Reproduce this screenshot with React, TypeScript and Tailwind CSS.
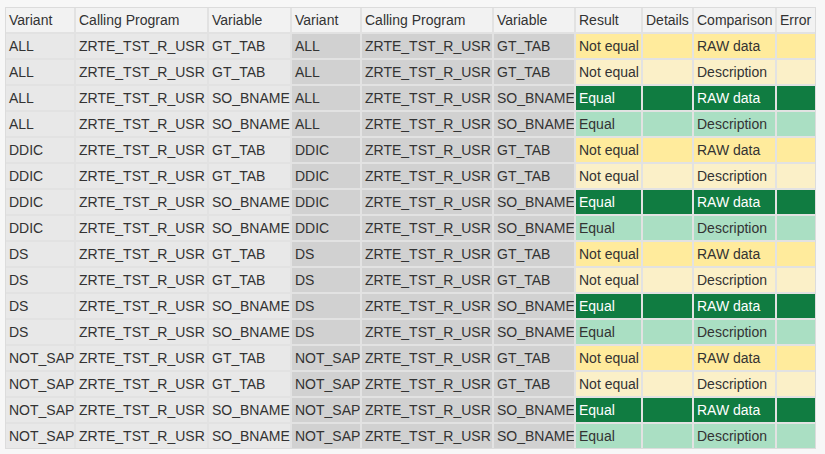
import React from "react";

const cols = "grid-cols-[68px_131px_81px_68px_130px_80px_65px_49px_81px_38px]";
const variants = ["ALL", "DDIC", "DS", "NOT_SAP"];
const rows: { v: string; var: string; eq: boolean; raw: boolean }[] = [];
for (const v of variants) {
  rows.push({ v, var: "GT_TAB", eq: false, raw: true });
  rows.push({ v, var: "GT_TAB", eq: false, raw: false });
  rows.push({ v, var: "SO_BNAME", eq: true, raw: true });
  rows.push({ v, var: "SO_BNAME", eq: true, raw: false });
}

export default function App() {
  const headers = ["Variant", "Calling Program", "Variable", "Variant", "Calling Program", "Variable", "Result", "Details", "Comparison", "Error"];
  return (
    <div className="w-[825px] h-[454px] bg-[#f7f7f7] pt-[7px] pl-[5px] overflow-hidden text-[14px] text-[#333]" style={{ fontFamily: '"Liberation Sans", Arial, sans-serif' }}>
      <div className={`grid ${cols} gap-[2px] bg-[#e2e2e2] border-[1px] border-[#dcdcdc] w-fit auto-rows-[24px]`}>
        {headers.map((h, i) => (
          <div key={i} className="bg-[#f2f2f2] px-[3px] flex items-center whitespace-nowrap overflow-hidden">{h}</div>
        ))}
        {rows.map((r, i) => {
          const res = r.eq ? (r.raw ? "bg-[#107c41] text-white" : "bg-[#aadfc3]") : (r.raw ? "bg-[#ffeb9c]" : "bg-[#fbf0c8]");
          const cells = [
            ["bg-[#e8e8e8]", r.v], ["bg-[#e8e8e8]", "ZRTE_TST_R_USR"], ["bg-[#e8e8e8]", r.var],
            ["bg-[#d1d1d1]", r.v], ["bg-[#d1d1d1]", "ZRTE_TST_R_USR"], ["bg-[#d1d1d1]", r.var],
            [res, r.eq ? "Equal" : "Not equal"], [res, ""], [res, r.raw ? "RAW data" : "Description"], [res, ""],
          ];
          return cells.map(([c, t], j) => (
            <div key={`${i}-${j}`} className={`${c} px-[3px] flex items-center whitespace-nowrap overflow-hidden`}>{t}</div>
          ));
        })}
      </div>
    </div>
  );
}
